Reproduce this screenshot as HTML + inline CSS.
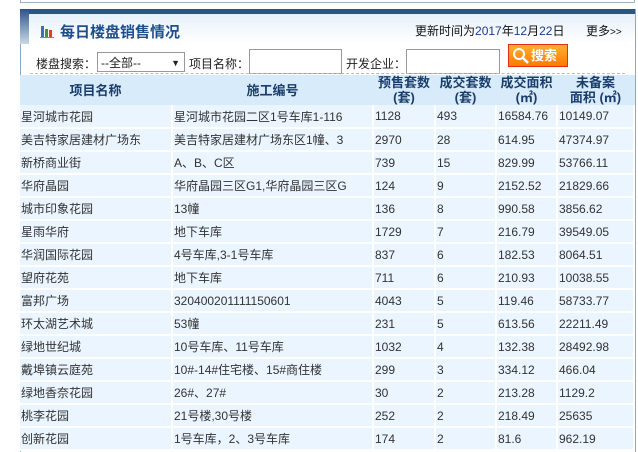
<html><head><style>
body{margin:0;width:638px;height:452px;background:#fff;position:relative;overflow:hidden;font-family:"Liberation Sans","Noto Sans CJK SC",sans-serif;font-size:12px;color:#222}
.a{position:absolute}
table{border-collapse:collapse;position:absolute;left:20px;top:75px;width:614px;table-layout:fixed}
tr{height:23px}
td{height:23px;box-sizing:border-box;border:1px solid #fff;border-width:0 2px 2px 0;background:#eaf5ff;padding:0 0 0 1px;white-space:nowrap;overflow:hidden;font-size:12px;color:#333}
tr.h{height:30px}
th{background:#d8ebfa;color:#1a3d6b;font-size:13px;font-weight:bold;height:30px;box-sizing:border-box;line-height:15px;border-right:2px solid #d8ebfa;padding:0}
</style></head><body>
<div class="a" style="left:20px;top:0;width:613px;height:2px;border:1px solid #9fb4c8;border-top:0;background:#fff"></div>
<div class="a" style="left:20px;top:9px;width:614px;height:443px;border-left:1px solid #8aa9c4;border-right:1px solid #8aa9c4;background:#fff"></div>
<div class="a" style="left:20px;top:9px;width:615px;height:5px;background:#2d5487"></div>
<div class="a" style="left:20px;top:9px;width:9px;height:35px;background:linear-gradient(#2d5487,#c8d8e8)"></div>
<div class="a" style="left:29px;top:14px;width:606px;height:30px;background:linear-gradient(#e6f0fa,#fff)"></div>
<svg class="a" style="left:40px;top:24px" width="16" height="14"><rect x="1" y="2" width="3" height="11" fill="#3a6fc0"/><rect x="5" y="5" width="3" height="8" fill="#3a9a3a"/><rect x="9" y="6" width="3" height="7" fill="#e04020"/><rect x="0" y="13" width="14" height="1" fill="#888"/></svg>
<div class="a" style="left:60px;top:21px;font-size:15px;font-weight:bold;color:#1f4e8c">每日楼盘销售情况</div>
<div class="a" style="left:415px;top:22px;font-size:12px;color:#111">更新时间为<span style="color:#1a3d8c">2017</span>年<span style="color:#1a3d8c">12</span>月<span style="color:#1a3d8c">22</span>日</div>
<div class="a" style="left:586px;top:22px;font-size:12px;color:#111">更多<span style="font-size:10px">&gt;&gt;</span></div>
<div class="a" style="left:36px;top:55px;font-size:12px">楼盘搜索：</div>
<div class="a" style="left:97px;top:52px;width:88px;height:20px;border:1px solid #999;background:#fff;font-size:12px;line-height:20px;box-sizing:border-box;padding-left:3px">--全部--<span style="position:absolute;right:4px;font-size:9px">▼</span></div>
<div class="a" style="left:189px;top:55px">项目名称：</div>
<div class="a" style="left:249px;top:49px;width:93px;height:25px;border:1px solid #999;box-sizing:border-box;background:#fff"></div>
<div class="a" style="left:346px;top:55px">开发企业：</div>
<div class="a" style="left:406px;top:49px;width:94px;height:25px;border:1px solid #999;box-sizing:border-box;background:#fff"></div>
<div class="a" style="left:508px;top:44px;width:60px;height:23px;box-sizing:border-box;border:1px solid #e03010;background:linear-gradient(#ffb030,#ff7a00);color:#fff;font-weight:bold;font-size:13px;line-height:21px;padding-left:22px">搜索</div>
<svg class="a" style="left:512px;top:47px" width="18" height="18"><circle cx="7" cy="7" r="5" fill="none" stroke="#fff" stroke-width="2"/><line x1="11" y1="11" x2="16" y2="16" stroke="#fff" stroke-width="2.5"/></svg>
<div class="a" style="left:30px;top:73px;width:595px;border-top:1px dashed #bbb"></div>
<table>
<colgroup><col style="width:152px"><col style="width:201px"><col style="width:62px"><col style="width:61px"><col style="width:61px"><col style="width:77px"></colgroup>
<tr class="h"><th>项目名称</th><th>施工编号</th><th>预售套数<br>(套)</th><th>成交套数<br>(套)</th><th>成交面积<br>(㎡)</th><th>未备案<br>面积 (㎡)</th></tr>
<tr><td>星河城市花园</td><td>星河城市花园二区1号车库1-116</td><td>1128</td><td>493</td><td>16584.76</td><td>10149.07</td></tr>
<tr><td>美吉特家居建材广场东</td><td>美吉特家居建材广场东区1幢、3</td><td>2970</td><td>28</td><td>614.95</td><td>47374.97</td></tr>
<tr><td>新桥商业街</td><td>A、B、C区</td><td>739</td><td>15</td><td>829.99</td><td>53766.11</td></tr>
<tr><td>华府晶园</td><td>华府晶园三区G1,华府晶园三区G</td><td>124</td><td>9</td><td>2152.52</td><td>21829.66</td></tr>
<tr><td>城市印象花园</td><td>13幢</td><td>136</td><td>8</td><td>990.58</td><td>3856.62</td></tr>
<tr><td>星雨华府</td><td>地下车库</td><td>1729</td><td>7</td><td>216.79</td><td>39549.05</td></tr>
<tr><td>华润国际花园</td><td>4号车库,3-1号车库</td><td>837</td><td>6</td><td>182.53</td><td>8064.51</td></tr>
<tr><td>望府花苑</td><td>地下车库</td><td>711</td><td>6</td><td>210.93</td><td>10038.55</td></tr>
<tr><td>富邦广场</td><td>320400201111150601</td><td>4043</td><td>5</td><td>119.46</td><td>58733.77</td></tr>
<tr><td>环太湖艺术城</td><td>53幢</td><td>231</td><td>5</td><td>613.56</td><td>22211.49</td></tr>
<tr><td>绿地世纪城</td><td>10号车库、11号车库</td><td>1032</td><td>4</td><td>132.38</td><td>28492.98</td></tr>
<tr><td>戴埠镇云庭苑</td><td>10#-14#住宅楼、15#商住楼</td><td>299</td><td>3</td><td>334.12</td><td>466.04</td></tr>
<tr><td>绿地香奈花园</td><td>26#、27#</td><td>30</td><td>2</td><td>213.28</td><td>1129.2</td></tr>
<tr><td>桃李花园</td><td>21号楼,30号楼</td><td>252</td><td>2</td><td>218.49</td><td>25635</td></tr>
<tr><td>创新花园</td><td>1号车库，2、3号车库</td><td>174</td><td>2</td><td>81.6</td><td>962.19</td></tr>
</table>
</body></html>
